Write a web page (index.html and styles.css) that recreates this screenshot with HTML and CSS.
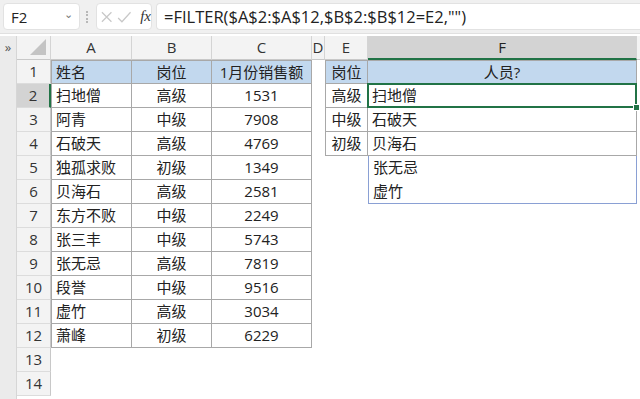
FILE: index.html
```html
<!DOCTYPE html>
<html lang="zh-CN">
<head>
    <meta charset="UTF-8">
    <title>FILTER</title>
    <link rel="stylesheet" href="styles.css">
</head>
<body>

    <div class="formula-bar">
        <div class="name-box">F2 <span class="chev">&#8964;</span></div>
        <div class="grip"></div>
        <div class="fx-box">
            <svg width="40" height="16" viewBox="0 0 40 16">
                <path d="M2 3 L12 13 M12 3 L2 13" stroke="#c8c8c8" stroke-width="1.3" fill="none"/>
                <path d="M19 9 L23 13 L32 3" stroke="#c8c8c8" stroke-width="1.3" fill="none"/>
            </svg>
            <span class="fx">fx</span>
        </div>
        <div class="formula">=FILTER($A$2:$A$12,$B$2:$B$12=E2,"")</div>
    </div>

    <div class="main">
        <div class="side">&raquo;</div>
        <div class="sheet">
            <!-- cabeçalho das colunas -->
            <div class="ch corner"><span class="tri"></span></div>
            <div class="ch">A</div><div class="ch">B</div><div class="ch">C</div><div class="ch">D</div><div class="ch">E</div>
            <div class="ch sel-col">F</div><div class="ch rest"></div>

            <div class="rh">1</div>
            <div class="c t hd top l left">姓名</div><div class="c t hd top">岗位</div><div class="c t hd top">1月份销售额</div>
            <div class="c"></div><div class="c t hd top l">岗位</div><div class="c t hd top">人员?</div><div class="c"></div>

            <div class="rh sel-row">2</div>
            <div class="c t l left">扫地僧</div><div class="c t">高级</div><div class="c t">1531</div>
            <div class="c"></div><div class="c t l">高级</div><div class="c t left active">扫地僧<span class="handle"></span></div><div class="c"></div>

            <div class="rh">3</div>
            <div class="c t l left">阿青</div><div class="c t">中级</div><div class="c t">7908</div>
            <div class="c"></div><div class="c t l">中级</div><div class="c t left">石破天</div><div class="c"></div>

            <div class="rh">4</div>
            <div class="c t l left">石破天</div><div class="c t">高级</div><div class="c t">4769</div>
            <div class="c"></div><div class="c t l">初级</div><div class="c t left">贝海石</div><div class="c"></div>

            <div class="rh">5</div>
            <div class="c t l left">独孤求败</div><div class="c t">初级</div><div class="c t">1349</div>
            <div class="c"></div><div class="c"></div><div class="c left spill">张无忌</div><div class="c"></div>

            <div class="rh">6</div>
            <div class="c t l left">贝海石</div><div class="c t">高级</div><div class="c t">2581</div>
            <div class="c"></div><div class="c"></div><div class="c left spill spill-end">虚竹</div><div class="c"></div>

            <div class="rh">7</div>
            <div class="c t l left">东方不败</div><div class="c t">中级</div><div class="c t">2249</div>
            <div class="c empty"></div>

            <div class="rh">8</div>
            <div class="c t l left">张三丰</div><div class="c t">中级</div><div class="c t">5743</div>
            <div class="c empty"></div>

            <div class="rh">9</div>
            <div class="c t l left">张无忌</div><div class="c t">高级</div><div class="c t">7819</div>
            <div class="c empty"></div>

            <div class="rh">10</div>
            <div class="c t l left">段誉</div><div class="c t">中级</div><div class="c t">9516</div>
            <div class="c empty"></div>

            <div class="rh">11</div>
            <div class="c t l left">虚竹</div><div class="c t">高级</div><div class="c t">3034</div>
            <div class="c empty"></div>

            <div class="rh">12</div>
            <div class="c t l left">萧峰</div><div class="c t">初级</div><div class="c t">6229</div>
            <div class="c empty"></div>

            <div class="rh">13</div>
            <div class="c row-empty"></div>

            <div class="rh">14</div>
            <div class="c row-empty"></div>
        </div>
    </div>

</body>
</html>
```

FILE: styles.css
```css
/* planilha estilo Excel */
body { margin: 0; width: 640px; height: 399px; overflow: hidden; background: #fff; font-family: "Open Sans", "Noto Sans CJK SC", sans-serif; color: #222; }

.formula-bar { height: 34px; background: #f0f0f0; border-bottom: 1px solid #e0e0e0; display: flex; align-items: center; padding: 0 0 0 3px; gap: 4px; box-sizing: border-box; }
.name-box { width: 77px; height: 27px; background: #fff; border: 1px solid #e2e2e2; border-radius: 4px; box-sizing: border-box; display: flex; align-items: center; justify-content: space-between; padding: 0 6px 0 7px; font-size: 15px; }
.chev { font-size: 11px; color: #777; margin-top: -6px; }
.grip { width: 2px; height: 12px; border-left: 2px dotted #b8b8b8; margin: 0 2px; }
.fx-box { width: 56px; height: 27px; background: #fff; border: 1px solid #e2e2e2; border-radius: 4px; box-sizing: border-box; display: flex; align-items: center; padding-left: 3px; gap: 2px; }
.fx { font-family: "Liberation Serif", serif; font-style: italic; font-size: 15px; color: #333; }
.formula { flex: 1; height: 27px; background: #fff; border: 1px solid #e2e2e2; border-radius: 4px 0 0 4px; border-right: none; box-sizing: border-box; padding-left: 7px; font-size: 16.5px; line-height: 25px; }

.main { display: flex; padding-top: 2px; }
.side { width: 17px; height: 363px; background: #ebebeb; border-right: 1px solid #d6d6d6; font-size: 13px; color: #555; text-align: center; line-height: 18px; padding-top: 2px; box-sizing: border-box; }

.sheet { display: grid; grid-template-columns: 34px 81px 80px 100px 13px 43px 269px 3px; grid-auto-rows: 24px; font-size: 15px; }
.sheet > div { box-sizing: border-box; line-height: 23px; text-align: center; white-space: nowrap; overflow: hidden; }

.ch { background: #f3f3f3; color: #333; border-right: 1px solid #d4d4d4; border-bottom: 1px solid #c8c8c8; }
.ch.sel-col { background: #d3d3d3; border-bottom: 2px solid #217346; color: #222; }
.ch.rest { border-right: none; }
.corner { position: relative; }
.tri { position: absolute; right: 4px; bottom: 4px; width: 0; height: 0; border-left: 16px solid transparent; border-bottom: 16px solid #c4c4c4; }

.rh { background: #f3f3f3; color: #333; border-right: 1px solid #c8c8c8; border-bottom: 1px solid #dcdcdc; }
.rh.sel-row { background: #d3d3d3; border-right: 2px solid #217346; }

.t { border-right: 1px solid #a8a8a8; border-bottom: 1px solid #a8a8a8; }
.t.l { border-left: 1px solid #a8a8a8; }
.t.top { border-top: 1px solid #a8a8a8; line-height: 22px !important; }
.hd { background: #c2d8ee; }
.left { text-align: left !important; padding-left: 4px; }
.empty { grid-column: span 4; }
.row-empty { grid-column: span 7; }

.spill { border-right: 1px solid #8aa0d4; border-left: 1px solid #8aa0d4; }
.spill-end { border-bottom: 1px solid #8aa0d4; }
.active { position: relative; overflow: visible !important; }
.active::after { content: ""; position: absolute; left: -1px; top: -1px; right: -1px; bottom: -1px; border: 2px solid #217346; }
.handle { position: absolute; right: -4px; bottom: -4px; width: 5px; height: 5px; background: #217346; border: 1px solid #fff; z-index: 2; }
```
